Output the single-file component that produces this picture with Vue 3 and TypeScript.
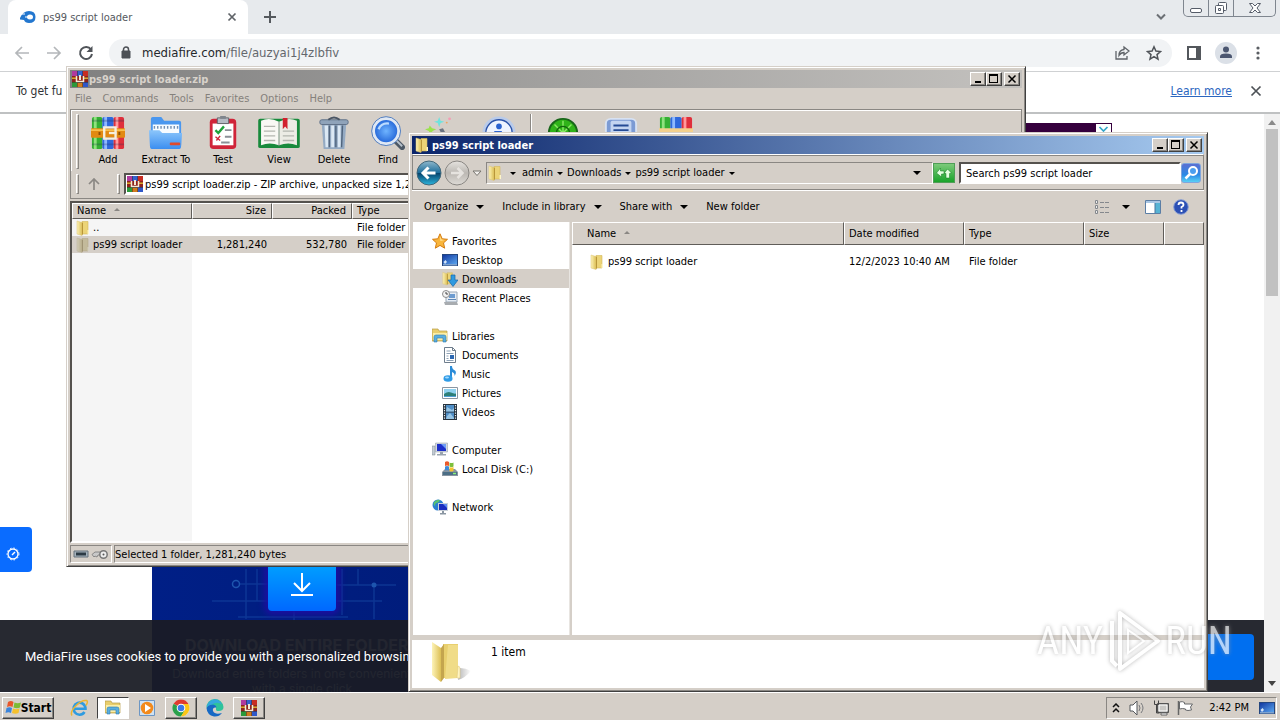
<script setup lang="ts">
import { ref } from 'vue'

interface ToolItem { label: string; icon: string; width: number }
interface TreeItem { label: string; icon: string; active?: boolean }
interface TreeGroup { label: string; icon: string; children: TreeItem[] }

const menus = ['File', 'Commands', 'Tools', 'Favorites', 'Options', 'Help']

const tools: ToolItem[] = [
  { label: 'Add', icon: 'i-books', width: 58 },
  { label: 'Extract To', icon: 'i-extract', width: 58 },
  { label: 'Test', icon: 'i-test', width: 56 },
  { label: 'View', icon: 'i-view', width: 56 },
  { label: 'Delete', icon: 'i-trash', width: 54 },
  { label: 'Find', icon: 'i-find', width: 54 },
  { label: '', icon: 'i-wizard', width: 54 },
  { label: '', icon: 'i-info', width: 60 },
]
const extraTools: ToolItem[] = [
  { label: '', icon: 'i-scan', width: 60 },
  { label: '', icon: 'i-comment', width: 56 },
  { label: '', icon: 'i-sfx', width: 54 },
]

const crumbs = ['admin', 'Downloads', 'ps99 script loader']
const commands = [
  { label: 'Organize', menu: true },
  { label: 'Include in library', menu: true },
  { label: 'Share with', menu: true },
  { label: 'New folder', menu: false },
]

const tree: TreeGroup[] = [
  {
    label: 'Favorites', icon: 'i-star', children: [
      { label: 'Desktop', icon: 'i-desktop' },
      { label: 'Downloads', icon: 'i-downloads', active: true },
      { label: 'Recent Places', icon: 'i-recent' },
    ],
  },
  {
    label: 'Libraries', icon: 'i-library', children: [
      { label: 'Documents', icon: 'i-doc' },
      { label: 'Music', icon: 'i-music' },
      { label: 'Pictures', icon: 'i-pic' },
      { label: 'Videos', icon: 'i-video' },
    ],
  },
  { label: 'Computer', icon: 'i-computer', children: [{ label: 'Local Disk (C:)', icon: 'i-disk' }] },
  { label: 'Network', icon: 'i-network', children: [] },
]

const tasks = [
  { label: 'Internet Explorer', icon: 'i-ie', state: '' },
  { label: 'Windows Explorer', icon: 'i-library', state: 'pressed' },
  { label: 'Media Player', icon: 'i-wmp', state: '' },
  { label: 'Chrome', icon: 'i-chrome', state: 'raised' },
  { label: 'Edge', icon: 'i-edge', state: '' },
  { label: 'WinRAR', icon: 'i-rar', state: 'raised' },
]

const archivePath = ref('ps99 script loader.zip - ZIP archive, unpacked size 1,281,240 bytes')
const query = ref('Search ps99 script loader')
</script>

<template>
  <div class="desktop">
    <svg class="defs" width="0" height="0" aria-hidden="true">
      <defs>
        <linearGradient id="g-folder" x1="0" x2="1"><stop offset="0" stop-color="#fdf3b8" /><stop offset="1" stop-color="#dcbf55" /></linearGradient>
        <linearGradient id="g-blue" x1="0" y1="0" x2="0" y2="1"><stop offset="0" stop-color="#8cc6fb" /><stop offset="1" stop-color="#3b8ef0" /></linearGradient>
        <linearGradient id="g-screen" x1="0" y1="0" x2="1" y2="1"><stop offset="0" stop-color="#1238a0" /><stop offset="1" stop-color="#5aa5ee" /></linearGradient>
        <linearGradient id="g-nav" x1="0" y1="0" x2="0" y2="1"><stop offset="0" stop-color="#8fb8cc" /><stop offset=".48" stop-color="#1f6f9c" /><stop offset=".52" stop-color="#07466f" /><stop offset="1" stop-color="#2cb5dd" /></linearGradient>
        <linearGradient id="g-off" x1="0" y1="0" x2="0" y2="1"><stop offset="0" stop-color="#e6e3df" /><stop offset=".5" stop-color="#bcb8b3" /><stop offset="1" stop-color="#dedbd6" /></linearGradient>
        <radialGradient id="g-lens"><stop offset="0" stop-color="#6fb4ff" /><stop offset="1" stop-color="#1f62d6" /></radialGradient>
        <linearGradient id="g-shade" x1="0" x2="1"><stop offset="0" stop-color="#888" /><stop offset="1" stop-color="#888" stop-opacity="0" /></linearGradient>
      </defs>
      <symbol id="i-folder" viewBox="0 0 16 16">
        <path d="M7 1.500h6v12.500H7z" fill="#ecd477" stroke="#d3b75a" stroke-width=".6" />
        <path d="M2 1l5 1.500v13L2 14z" fill="url(#g-folder)" stroke="#dcc574" stroke-width=".5" />
        <path d="M7 2.500l1 .5v11l-1 1.500z" fill="#b8963a" /><path d="M12.500 10h1.500v4h-1.500z" fill="#fff6c8" />
      </symbol>
      <symbol id="i-rar" viewBox="0 0 16 16">
        <path d="M0 0h16v16H0z" fill="#3a2418" /><path d="M0 0h5v5H0z" fill="#b03a9e" /><path d="M5.500 0h5v5h-5z" fill="#3561cf" /><path d="M11 0h5v5h-5z" fill="#c72c22" />
        <path d="M0 5h16v6H0z" fill="#8f241c" /><path d="M0 6.500h4v1.500H0zM12 6.500h4v1.500h-4z" fill="#d9a92c" /><path d="M4.500 5v5.500h7V5" fill="none" stroke="#f3ead6" stroke-width="1.500" /><path d="M7 4h2v5H7z" fill="#f3ead6" />
        <path d="M0 11.500h5V16H0z" fill="#2b9a3a" /><path d="M5.500 12h5v4h-5z" fill="#d07c1f" /><path d="M11 11.500h5V16h-5z" fill="#2f58c9" />
      </symbol>
      <symbol id="i-books" viewBox="0 0 36 36">
        <rect x="1" y="1" width="11" height="34" rx="2" fill="#35b034" /><rect x="3" y="1" width="3" height="34" fill="#8fe27e" />
        <rect x="12" y="1" width="12" height="34" rx="2" fill="#2f68dc" /><rect x="14" y="1" width="3" height="34" fill="#8fb9ff" />
        <rect x="24" y="1" width="11" height="34" rx="2" fill="#df2f3b" /><rect x="26" y="1" width="3" height="34" fill="#ff9a9d" />
        <path d="M1 4h34v2H1zM1 29h34v2H1z" fill="#1c2b52" opacity=".25" />
        <rect x="0" y="13" width="36" height="10" rx="1" fill="#e28a12" /><path d="M0 14h36v2H0z" fill="#f8c04d" />
        <path d="M14 12h12v12H14z" fill="none" stroke="#f5efdf" stroke-width="2.500" /><path d="M19 18h8" stroke="#f5efdf" stroke-width="2.500" /><path d="M30 17v3M9 17v3" stroke="#8d4f06" stroke-width="2" />
      </symbol>
      <symbol id="i-sfx" viewBox="0 0 36 36">
        <rect x="1" y="1" width="11" height="14" rx="2" fill="#35b034" /><rect x="3" y="1" width="3" height="14" fill="#8fe27e" />
        <rect x="12" y="1" width="12" height="14" rx="2" fill="#2f68dc" /><rect x="14" y="1" width="3" height="14" fill="#8fb9ff" />
        <rect x="24" y="1" width="11" height="14" rx="2" fill="#df2f3b" /><rect x="26" y="1" width="3" height="14" fill="#ff9a9d" />
        <path d="M0 13h36v22H0z" fill="#f3d08c" />
      </symbol>
      <symbol id="i-extract" viewBox="0 0 36 36">
        <path d="M2 3q0-2 2-2h9l3 4h16q2 0 2 2v24H2z" fill="#4a97ef" /><path d="M4 9h28v12H4z" fill="#f7fbff" />
        <path d="M5 12h26" stroke="#7390b4" stroke-width="3" stroke-dasharray="1.500 2" />
        <path d="M0 15h11l3 3h21l-1 14q0 3-3 3H4q-3 0-3-3z" fill="url(#g-blue)" /><rect x="22" y="28" width="11" height="3" rx="1" fill="#e14a2b" />
      </symbol>
      <symbol id="i-test" viewBox="0 0 36 36">
        <rect x="4" y="3" width="28" height="32" rx="4" fill="#d02439" /><path d="M7 8h22v23H7z" fill="#fff" /><path d="M12 2h12v6H12z" fill="#b6bcc4" stroke="#61656b" /><path d="M15 0h6v3h-6z" fill="#7f858c" />
        <path d="M10 15l3 3 6-7" fill="none" stroke="#21a23c" stroke-width="2.500" /><path d="M20 15h7M20 22h7M16 28h9" stroke="#8b9097" stroke-width="2" /><path d="M10 22l5 4M15 21l-4 5" stroke="#d02439" stroke-width="1.500" />
      </symbol>
      <symbol id="i-view" viewBox="0 0 44 36">
        <rect x="0" y="3" width="44" height="31" rx="2" fill="#188a3c" /><path d="M3 5q9-4 19 1v25q-10-4-19 0z" fill="#f8f8f4" /><path d="M41 5q-9-4-19 1v25q10-4 19 0z" fill="#ecece5" />
        <path d="M6 11h12M6 16h12M6 21h12M6 26h12M26 16h12M26 21h12M26 26h12" stroke="#b2b5ae" stroke-width="1.500" /><path d="M22 6v26" stroke="#6f8b77" /><path d="M26 2h5v12l-2.500-3-2.500 3z" fill="#d2202e" />
      </symbol>
      <symbol id="i-trash" viewBox="0 0 36 36">
        <path d="M5 8h26l-2 27H7z" fill="#94aac3" /><path d="M8 10l1 23h3V10zM15 10v23h3V10zM22 10v23h3V10z" fill="#dbe8f4" /><path d="M13 10v23M20 10v23M27 10l-1 23" stroke="#50647c" stroke-width="1.500" />
        <rect x="3" y="4" width="30" height="5" rx="2" fill="#8fa3ba" stroke="#5d6f86" /><path d="M12 4q6-5 12 0" fill="none" stroke="#4a5564" stroke-width="2" />
      </symbol>
      <symbol id="i-find" viewBox="0 0 36 36">
        <path d="M24 24l9 9" stroke="#4d5966" stroke-width="6" stroke-linecap="round" /><path d="M26 25l7 7" stroke="#b8c2cc" stroke-width="2" />
        <circle cx="16" cy="16" r="13.500" fill="url(#g-lens)" stroke="#dfe8f4" stroke-width="3.500" /><circle cx="16" cy="16" r="15.300" fill="none" stroke="#4b79bd" /><path d="M8 14q3-7 11-6" fill="none" stroke="#bcdcff" stroke-width="2.500" />
      </symbol>
      <symbol id="i-wizard" viewBox="0 0 36 36">
        <path d="M15 1l1.500 4 4 1-4 1.500L15 12l-1.500-4.500-4-1.500 4-1z" fill="#6fe3de" /><circle cx="26" cy="3" r="1.500" fill="#f59cb4" /><circle cx="23" cy="7" r="1" fill="#f3a45b" /><path d="M5 10l2.500 3L12 14l-4 2-2 4-2-4-4-2 4-1z" fill="#9be24d" /><path d="M15 14l4-1 12 22-4 2z" fill="#6b7380" />
      </symbol>
      <symbol id="i-info" viewBox="0 0 36 36">
        <circle cx="18" cy="18" r="16" fill="#eef4ff" stroke="#b9cbea" stroke-width="3" /><circle cx="18" cy="18" r="14" fill="none" stroke="#2a52a8" stroke-width="1.500" /><circle cx="18" cy="11" r="3" fill="#2b63cf" /><path d="M13 16h8v13h3v2H13v-2h3V18h-3z" fill="#2b63cf" />
      </symbol>
      <symbol id="i-scan" viewBox="0 0 36 36">
        <circle cx="18" cy="18" r="15" fill="#2fb319" stroke="#18661a" stroke-width="2" /><path d="M18 5v26M5 18h26M9 9l18 18M27 9L9 27" stroke="#8bea67" stroke-width="1.500" /><circle cx="18" cy="18" r="7" fill="none" stroke="#12660d" stroke-width="1.500" />
      </symbol>
      <symbol id="i-comment" viewBox="0 0 36 36">
        <rect x="2" y="3" width="32" height="26" rx="5" fill="#7c9bd4" stroke="#d8e2f2" stroke-width="2" /><rect x="7" y="5" width="22" height="22" rx="2" fill="#c3d4f0" /><path d="M10 10h16M10 15h16" stroke="#254a94" stroke-width="2" />
      </symbol>
      <symbol id="i-star" viewBox="0 0 16 16"><path d="M8 .8l2.200 5 5.300.5-4 3.600 1.200 5.300L8 12.400l-4.700 2.800 1.200-5.300-4-3.600 5.300-.5z" fill="#f9b63c" stroke="#d47c12" /><path d="M8 3l1.400 3.500 3 .5-4 1z" fill="#ffe39a" /></symbol>
      <symbol id="i-desktop" viewBox="0 0 16 16"><path d="M0 2h16v12H0z" fill="#24467f" /><path d="M1 3h14v9H1z" fill="url(#g-screen)" /><path d="M1 12h14v1.500H1z" fill="#7fa3cf" /><path d="M1.500 10l2-2 1.500 2-2 2z" fill="#d5e7f8" /></symbol>
      <symbol id="i-downloads" viewBox="0 0 16 16"><use href="#i-folder" x="-1" width="14" height="15" /><path d="M9 4h4v5h3l-5 6.500L6 9h3z" fill="#2f9ae0" stroke="#1766a8" stroke-width=".7" /></symbol>
      <symbol id="i-recent" viewBox="0 0 16 16"><path d="M4 2h11v10H4z" fill="#e6edf5" stroke="#9aa7b4" /><path d="M7 4h6v4H7z" fill="#6d9cd0" /><path d="M2 12h13l1 3H3z" fill="#a8acb0" /><path d="M6 9.500h8" stroke="#5f88b6" /><circle cx="4" cy="4" r="3.500" fill="#f3f3f3" stroke="#8c8c8c" /><path d="M4 2v2h2" fill="none" stroke="#444" /></symbol>
      <symbol id="i-library" viewBox="0 0 16 16"><path d="M0 1h6l1 2h8v10H0z" fill="#e9ce6c" stroke="#b89b45" stroke-width=".7" /><path d="M1 5h14v7H1z" fill="#fbeea8" /><path d="M2 14V9q0-2 2-2h8q2 0 2 2v5h-3v-4H5v4z" fill="#5aaede" stroke="#2b7bb0" stroke-width=".6" /></symbol>
      <symbol id="i-doc" viewBox="0 0 16 16"><path d="M2.500.5h8l3 3v12h-11z" fill="#fff" stroke="#6e7d8c" /><path d="M10.500.5v3h3" fill="none" stroke="#6e7d8c" /><path d="M4.500 4h4M4.500 6.500h7M4.500 9h2M4.500 11.500h2M4.500 13.500h7" stroke="#8ea2b6" /><path d="M8 8h4v4H8z" fill="#2c68b2" /></symbol>
      <symbol id="i-music" viewBox="0 0 16 16"><path d="M8 0h2q0 3 3 4.500Q15 6.500 12.500 10q.5-3-2.500-4v6.500H8z" fill="#2b8cd8" /><ellipse cx="6" cy="12.500" rx="4.500" ry="3.300" fill="#2f9be6" /><ellipse cx="5" cy="11.500" rx="2" ry="1" fill="#a5dbff" /></symbol>
      <symbol id="i-pic" viewBox="0 0 16 16"><path d="M.5 2.500h15v11H.5z" fill="#fff" stroke="#8a96a2" /><path d="M2 4h12v8H2z" fill="#8fd1ef" /><path d="M2 9q4-3 7-1.500t5 1V12H2z" fill="#2d7f78" /><path d="M2 11h12v1H2z" fill="#4f9fd6" /></symbol>
      <symbol id="i-video" viewBox="0 0 16 16"><path d="M1 0h14v16H1z" fill="#26323d" /><path d="M4 1h8v6.500H4zM4 8.500h8V15H4z" fill="#4f8ec6" /><path d="M5 3l5 3 2-2v3.500H4zM5 12l3-3 4 5v1H4z" fill="#96c4e4" /><path d="M2.500 1v15M13.500 1v15" stroke="#e8eef3" stroke-width="1.200" stroke-dasharray="1.200 1.300" /></symbol>
      <symbol id="i-computer" viewBox="0 0 16 16"><path d="M0 4h3v9H0z" fill="#c3cbd3" stroke="#7a858f" stroke-width=".5" /><path d="M3.500 1h12v9h-12z" fill="#d4d9df" stroke="#8b96a2" stroke-width=".5" /><path d="M5 2h9v7H5z" fill="#1c2fc9" /><path d="M9 2h5v5z" fill="#6f9df5" /><path d="M8 10h3v2h3v1.500H5V12h3z" fill="#9aa4af" /></symbol>
      <symbol id="i-disk" viewBox="0 0 16 16"><path d="M0 11l3-3h10l3 3v4H0z" fill="#8794a0" /><path d="M1 11h14v3H1z" fill="#4c6e86" /><path d="M11 12.500h3" stroke="#8cf07c" stroke-width="1.500" /><path d="M3 1q2-1.500 4 0v4q-2-1-4 0z" fill="#ea5a2a" /><path d="M7.500 1.500q2 1 4 0v4q-2 1-4 0z" fill="#7cbf3a" /><path d="M3 5.500q2-1 4 0v4q-2-1-4 0z" fill="#3d8ad8" /><path d="M7.500 6q2 1 4 0v4q-2 1-4 0z" fill="#f5c22e" /></symbol>
      <symbol id="i-network" viewBox="0 0 16 16"><circle cx="6" cy="6" r="5.500" fill="#2b7fd0" /><path d="M2 3q3-3 6-2-1 3-3 3t-2 3Q1 6 2 3z" fill="#57c172" /><path d="M6 4h10v8H6z" fill="#c8d0d8" /><path d="M7 5h8v6H7z" fill="#1a2dc0" /><path d="M11 5h4v4z" fill="#5e8af0" /><path d="M10 12h2v2h2v1.500H8V14h2z" fill="#8a96a2" /></symbol>
      <symbol id="i-ie" viewBox="0 0 20 20"><path d="M5.500 10.800h11a6 6 0 1 0-1 3.200" fill="none" stroke="#2e9be0" stroke-width="2.600" /><path d="M3 17.500C0 13 11 1.500 17.500 2.500c2 .8 0 4-.5 5" fill="none" stroke="#eab532" stroke-width="1.500" /></symbol>
      <symbol id="i-wmp" viewBox="0 0 20 20"><path d="M2.500 2.500h15v15h-15z" fill="#cfe2f3" stroke="#6c96c4" /><circle cx="10" cy="10" r="6.300" fill="#f28a1c" /><path d="M8 6l6 4-6 4z" fill="#fff" /></symbol>
      <symbol id="i-chrome" viewBox="0 0 20 20"><circle cx="10" cy="10" r="8.500" fill="#fff" /><path d="M10 10L2.600 5.700a8.500 8.500 0 0 1 14.800 0z" fill="#df3b2f" /><path d="M10 10L2.600 5.700A8.500 8.500 0 0 0 10 18.500l4-6z" fill="#2ba14b" /><path d="M10 6h7.500A8.500 8.500 0 0 1 10 18.500l4-7z" fill="#fbc617" /><circle cx="10" cy="10" r="4.300" fill="#fff" /><circle cx="10" cy="10" r="3.300" fill="#3a78e7" /></symbol>
      <symbol id="i-edge" viewBox="0 0 20 20"><path d="M1.500 10A8.500 8.500 0 0 1 18.500 9q0 4-5 4-3 0-2.500-2Q11.500 7 7 7q-4 0-5.500 3z" fill="#2fc39a" /><path d="M1.500 10Q3 6.500 7 6.500q4 0 4.500 3Q7 9 8 13q2 4 9 2-3 4-8 3.500-7-1.500-7.500-8.500z" fill="#1769c4" /><path d="M4 4q6-5 11-.5l2 3Q12 3 7 6.500 3 7 1.700 9 2 6 4 4z" fill="#35a7dd" /></symbol>
      <symbol id="i-flag" viewBox="0 0 16 16"><path d="M3 2q3-2 5.500 0L7.500 7Q5 5.500 2 7z" fill="#e8562a" /><path d="M9.500 2.500q3 1.500 6.500 0L15 7.500q-3 1.500-6.500 0z" fill="#7dbb35" /><path d="M1.500 8q3-1.500 5.500 0L6 13q-2.500-1.500-5.500 0z" fill="#3b85dc" /><path d="M8 8.500q3 1.500 6.500 0l-1 4.500q-3 1.500-6.500 0z" fill="#f5c02b" /></symbol>
    </svg>

    <section class="browser">
      <header class="tabstrip">
        <div class="tab">
          <svg width="16" height="14" viewBox="0 0 16 14"><path d="M0 8Q3 1 9 1q6.500 0 6.500 6T9 13Q5 13 4 10L0 9.500z" fill="#2377cf" /><ellipse cx="10" cy="7" rx="3" ry="2.500" fill="#fff" /><path d="M1 4h4M5 7h4" stroke="#fff" stroke-width="1" /></svg>
          <span>ps99 script loader</span>
          <button aria-label="Close tab"><svg width="10" height="10" viewBox="0 0 10 10"><path d="M1.500 1.500l7 7M8.500 1.500l-7 7" stroke="#5f6368" stroke-width="1.700" /></svg></button>
        </div>
        <button class="newtab" aria-label="New tab"><svg width="14" height="14" viewBox="0 0 14 14"><path d="M7 1v12M1 7h12" stroke="#55595e" stroke-width="2" /></svg></button>
        <button class="tabsearch" aria-label="Search tabs"><svg width="10" height="8" viewBox="0 0 10 8"><path d="M1 1.500l4 4 4-4" fill="none" stroke="#6c7075" stroke-width="2" /></svg></button>
        <div class="aero">
          <button aria-label="Minimize"><svg width="14" height="14" viewBox="0 0 14 14"><rect x="1.500" y="7.500" width="11" height="4" rx="1.500" fill="#fff" stroke="#555c68" /></svg></button>
          <button aria-label="Restore"><svg width="14" height="14" viewBox="0 0 14 14"><rect x="4.500" y="1.500" width="8" height="8" rx="1" fill="#fff" stroke="#555c68" /><rect x="1.500" y="4.500" width="8" height="8" rx="1" fill="#fff" stroke="#555c68" /><path d="M4.500 7.500h2v2h-2z" fill="#fff" stroke="#555c68" /></svg></button>
          <button aria-label="Close"><svg width="14" height="14" viewBox="0 0 14 14"><path d="M1.500 2.500h3L7 5l2.500-2.500h3L9 7l3.500 4.500h-3L7 9l-2.500 2.500h-3L5 7z" fill="#fff" stroke="#555c68" /></svg></button>
        </div>
      </header>
      <div class="navrow">
        <button aria-label="Back"><svg width="16" height="14" viewBox="0 0 16 14"><path d="M15 7H2M8 1L2 7l6 6" fill="none" stroke="#b4b7ba" stroke-width="1.700" /></svg></button>
        <button aria-label="Forward"><svg width="16" height="14" viewBox="0 0 16 14"><path d="M1 7h13M8 1l6 6-6 6" fill="none" stroke="#b4b7ba" stroke-width="1.700" /></svg></button>
        <button aria-label="Reload"><svg width="16" height="16" viewBox="0 0 16 16"><path d="M13 4.500A6 6 0 1 0 14 9" fill="none" stroke="#505459" stroke-width="2" /><path d="M14.500 1v6h-6z" fill="#505459" /></svg></button>
        <div class="omnibox">
          <svg width="10" height="14" viewBox="0 0 10 14"><path d="M1 5h8v7H1z" fill="#4d5156" stroke="#4d5156" stroke-linejoin="round" /><path d="M2.500 5V3.500a2.500 2.500 0 0 1 5 0V5" fill="none" stroke="#4d5156" stroke-width="1.500" /></svg>
          <span class="url">mediafire.com<i>/file/auzyai1j4zlbfiv</i></span>
          <button aria-label="Share"><svg width="16" height="16" viewBox="0 0 16 16"><path d="M2 6v8h11v-3" fill="none" stroke="#5f6368" stroke-width="1.300" /><path d="M10 2l5 4-5 4V7.500q-3 0-5 3 0-5.500 5-6z" fill="none" stroke="#5f6368" stroke-width="1.300" /></svg></button>
          <button aria-label="Bookmark"><svg width="16" height="16" viewBox="0 0 16 16"><path d="M8 1.800l1.900 4.300 4.600.4-3.500 3.100 1 4.600-4-2.500-4 2.500 1-4.600L1.500 6.500l4.600-.4z" fill="none" stroke="#505459" stroke-width="1.500" /></svg></button>
        </div>
        <button aria-label="Side panel"><svg width="14" height="14" viewBox="0 0 14 14"><path d="M1 1h12v12H1z" fill="none" stroke="#53575c" stroke-width="2" /><path d="M9 1h4v12H9z" fill="#53575c" /></svg></button>
        <button aria-label="Profile"><svg width="22" height="22" viewBox="0 0 22 22"><circle cx="11" cy="11" r="11" fill="#dbe0e7" /><circle cx="11" cy="7.500" r="3" fill="#4b5670" /><path d="M5 16v-1.500q0-3 6-3t6 3V16z" fill="#4b5670" /></svg></button>
        <button aria-label="Menu"><svg width="16" height="16" viewBox="0 0 16 16" fill="#5a5e63"><circle cx="8" cy="3" r="1.600" /><circle cx="8" cy="8" r="1.600" /><circle cx="8" cy="13" r="1.600" /></svg></button>
      </div>
      <div class="infobar">
        <span>To get fu</span>
        <a href="#">Learn more</a>
        <button aria-label="Dismiss"><svg width="12" height="12" viewBox="0 0 12 12"><path d="M1.500 1.500l9 9M10.500 1.500l-9 9" stroke="#4d5156" stroke-width="1.700" /></svg></button>
      </div>
      <main class="page">
        <div class="content">
          <div class="ad"><svg width="15" height="14" viewBox="0 0 15 14"><path d="M0 0h15v14H0z" fill="#fff" /><path d="M3.500 3l4 4 4-4" fill="none" stroke="#35a6c8" stroke-width="1.700" /></svg></div>
          <div class="promo">
            <div class="feature">
              <svg class="circuit" width="256" height="80" viewBox="0 0 256 80"><path d="M88 15h28M60 32h56M86 48h110M94 0v50M105 0v32M190 0v46M206 0v16M222 16v34M184 16h60M180 32h50M142 42v12" fill="none" stroke="#1d55ae" stroke-width="1.500" opacity=".45" /><circle cx="84" cy="15" r="3.500" fill="none" stroke="#1d55ae" stroke-width="1.500" /><circle cx="222" cy="16" r="2.500" fill="#1d55ae" /></svg>
              <div class="tile"><svg width="24" height="26" viewBox="0 0 24 26"><path d="M12 2v17M4 12l8 8 8-8M1 24h22" fill="none" stroke="#fff" stroke-width="2" /></svg></div>
              <strong>DOWNLOAD ENTIRE FOLDERS</strong>
              <p>Download entire folders in one convenient file with a single click</p>
            </div>
          </div>
        </div>
        <div class="scroll"><i class="up" /><i class="thumb" /><i class="down" /></div>
        <button class="side" aria-label="Settings"><svg width="14" height="14" viewBox="0 0 14 14"><circle cx="7" cy="7" r="5" fill="none" stroke="#fff" stroke-width="1.300" /><circle cx="7" cy="7" r="6" fill="none" stroke="#fff" stroke-dasharray="1.500 2" /><path d="M6 8l3-3" stroke="#fff" stroke-width="1.500" /></svg></button>
        <div class="cookie">
          <span>MediaFire uses cookies to provide you with a personalized browsing</span>
          <button aria-label="Accept cookies" />
        </div>
      </main>
    </section>

    <section class="window archive">
      <header class="title idle">
        <svg width="18" height="16"><use href="#i-rar" /></svg><span>ps99 script loader.zip</span>
        <div class="ctl">
          <button aria-label="Minimize"><svg width="12" height="10" viewBox="0 0 12 10"><path d="M3 7h6v2H3z" /></svg></button>
          <button aria-label="Maximize"><svg width="12" height="10" viewBox="0 0 12 10"><path d="M1 0h9v9H1zM2 2v6h7V2z" fill-rule="evenodd" /></svg></button>
          <button aria-label="Close"><svg width="12" height="10" viewBox="0 0 12 10"><path d="M2.500 1.500l7 7M9.500 1.500l-7 7" stroke="#000" stroke-width="1.500" /></svg></button>
        </div>
      </header>
      <nav class="menu"><button v-for="m in menus" :key="m">{{ m }}</button></nav>
      <div class="band">
        <i class="grip" />
        <button v-for="t in tools" :key="t.icon" :style="{ width: t.width + 'px' }"><svg :width="t.icon === 'i-view' ? 42 : 34" height="34"><use :href="'#' + t.icon" /></svg>{{ t.label }}</button>
        <i class="sep" />
        <button v-for="t in extraTools" :key="t.icon" :style="{ width: t.width + 'px' }"><svg width="34" height="34"><use :href="'#' + t.icon" /></svg>{{ t.label }}</button>
      </div>
      <div class="path">
        <i class="grip" />
        <button aria-label="Up"><svg width="12" height="12" viewBox="0 0 12 12"><path d="M6 12V2M1 6l5-5 5 5" fill="none" stroke="#8b8884" stroke-width="1.700" /></svg></button>
        <i class="grip" />
        <div class="pathbox"><svg width="16" height="16"><use href="#i-rar" /></svg><input v-model="archivePath" aria-label="Archive path" /></div>
      </div>
      <div class="files">
        <table>
          <colgroup><col class="c-name" /><col class="c-num" /><col class="c-num" /><col /></colgroup>
          <thead><tr><th>Name <i class="asc" /></th><th class="num">Size</th><th class="num">Packed</th><th>Type</th></tr></thead>
          <tbody>
            <tr><td><div><svg width="16" height="16"><use href="#i-folder" /></svg>..</div></td><td /><td /><td>File folder</td></tr>
            <tr class="sel"><td><div><svg width="16" height="16"><use href="#i-folder" /></svg>ps99 script loader</div></td><td class="num">1,281,240</td><td class="num">532,780</td><td>File folder</td></tr>
          </tbody>
        </table>
      </div>
      <footer class="status">
        <span class="cell"><svg width="36" height="12" viewBox="0 0 36 12"><path d="M1 3h14v6H1z" fill="#a4b1bb" stroke="#66727c" /><path d="M3 4.500h10v3H3z" fill="#2c3a44" /><path d="M19 6.500l3-2.500h6v3h-3l-1 2-2-1-1 1z" fill="#c9c9c9" stroke="#777" stroke-width=".8" /><circle cx="30.500" cy="6.500" r="3.700" fill="#eee" stroke="#777" stroke-width="1.500" /><circle cx="30.500" cy="6.500" r="1" fill="#555" /></svg></span>
        <span class="cell grow">Selected 1 folder, 1,281,240 bytes</span>
      </footer>
    </section>

    <section class="window explorer">
      <header class="title">
        <svg width="16" height="16"><use href="#i-folder" /></svg><span>ps99 script loader</span>
        <div class="ctl">
          <button aria-label="Minimize"><svg width="12" height="10" viewBox="0 0 12 10"><path d="M3 7h6v2H3z" /></svg></button>
          <button aria-label="Maximize"><svg width="12" height="10" viewBox="0 0 12 10"><path d="M1 0h9v9H1zM2 2v6h7V2z" fill-rule="evenodd" /></svg></button>
          <button aria-label="Close"><svg width="12" height="10" viewBox="0 0 12 10"><path d="M2.500 1.500l7 7M9.500 1.500l-7 7" stroke="#000" stroke-width="1.500" /></svg></button>
        </div>
      </header>
      <div class="nav">
        <button aria-label="Back"><svg width="26" height="26" viewBox="0 0 26 26"><circle cx="13" cy="13" r="12" fill="url(#g-nav)" stroke="#426779" /><path d="M19.500 13H8M12.500 7.500L7 13l5.500 5.500" fill="none" stroke="#fff" stroke-width="3" /></svg></button>
        <button aria-label="Forward"><svg width="26" height="26" viewBox="0 0 26 26"><circle cx="13" cy="13" r="12" fill="url(#g-off)" stroke="#8a8783" /><path d="M7 13h11M13.500 8l5 5-5 5" fill="none" stroke="#e6e3df" stroke-width="2.500" /></svg></button>
        <button class="recent" aria-label="Recent pages"><svg width="10" height="7" viewBox="0 0 10 7"><path d="M1 1h8L5 5.500z" fill="#f3f1ee" stroke="#77746f" /></svg></button>
        <div class="crumbs">
          <svg width="16" height="16"><use href="#i-folder" /></svg>
          <i class="tri lead" />
          <button v-for="c in crumbs" :key="c">{{ c }}<i class="tri" /></button>
          <i class="tri last" />
        </div>
        <button class="refresh" aria-label="Refresh"><svg width="20" height="18" viewBox="0 0 20 18"><path d="M2.500 9l4-5v3H10v3H7.500v3zM17.500 9l-4 -4-3.500 4.500h2V14h3.500V9.500z" fill="#e4ffe0" stroke="#0f7b1d" stroke-width=".5" /></svg></button>
        <input v-model="query" class="search" aria-label="Search" />
        <button class="go" aria-label="Search"><svg width="18" height="18" viewBox="0 0 18 18"><circle cx="11" cy="7" r="4" fill="#4b9eee" stroke="#fff" stroke-width="2" /><path d="M8 10l-4.500 4.500" stroke="#fff" stroke-width="2.500" /></svg></button>
      </div>
      <div class="commands">
        <button v-for="c in commands" :key="c.label">{{ c.label }}<i v-if="c.menu" class="tri big" /></button>
        <span class="fill" />
        <button aria-label="View"><svg width="16" height="14" viewBox="0 0 16 14"><path d="M1.500.500h2v3h-2zM1.500 5.500h2v3h-2zM1.500 10.500h2v3h-2z" fill="#eee" stroke="#84888d" /><path d="M6 2.500h4M11 2.500h4M6 7.500h4M11 7.500h4M6 12.500h4M11 12.500h4" stroke="#84888d" /></svg></button>
        <button class="drop" aria-label="View options"><i class="tri big" /></button>
        <button aria-label="Preview pane"><svg width="16" height="14" viewBox="0 0 16 14"><path d="M.5.500h15v13H.5z" fill="#fff" stroke="#5b7ea5" /><path d="M1 1h14v2H1z" fill="#a9c6e4" /><path d="M10 3h5v10h-5z" fill="#56b3d4" /><path d="M10 3v10" stroke="#48759d" /></svg></button>
        <button class="help" aria-label="Help"><svg width="16" height="16" viewBox="0 0 16 16"><circle cx="8" cy="8" r="7.300" fill="#2c50b5" stroke="#8ba0d4" /><path d="M5.500 6q0-2.500 2.500-2.500T10.500 6Q10.500 7 8.500 8v1.500M8.500 11v2" fill="none" stroke="#fff" stroke-width="1.800" /></svg></button>
      </div>
      <div class="panes">
        <nav class="tree">
          <div v-for="g in tree" :key="g.label" class="group">
            <a href="#" class="root"><svg width="16" height="16"><use :href="'#' + g.icon" /></svg><span>{{ g.label }}</span></a>
            <a v-for="c in g.children" :key="c.label" href="#" :class="{ active: c.active }"><svg width="16" height="16"><use :href="'#' + c.icon" /></svg><span>{{ c.label }}</span></a>
          </div>
        </nav>
        <div class="list">
          <table>
            <colgroup><col /><col class="c-a" /><col class="c-a" /><col class="c-b" /><col class="c-c" /></colgroup>
            <thead><tr><th>Name <i class="asc" /></th><th>Date modified</th><th>Type</th><th>Size</th><th /></tr></thead>
            <tbody><tr><td><div><svg width="16" height="16"><use href="#i-folder" /></svg>ps99 script loader</div></td><td>12/2/2023 10:40 AM</td><td>File folder</td><td /><td /></tr></tbody>
          </table>
        </div>
      </div>
      <footer class="details">
        <svg width="48" height="48" viewBox="0 0 48 48"><path d="M27 40l2-12q6 0 11 3-6 7-13 9z" fill="url(#g-shade)" opacity=".6" /><path d="M12 4h15v34H12z" fill="#e8cf6e" /><path d="M17 5h10v33l-13 1z" fill="#f0dc88" /><path d="M1 2l9 6v34L1 35z" fill="url(#g-folder)" /><path d="M10 8l3-4v34l-3 4z" fill="#c4a54e" /><path d="M27 26q2 0 2 3v9h-3z" fill="#fff5c4" stroke="#dcc574" stroke-width=".5" /></svg>
        <span>1 item</span>
      </footer>
    </section>

    <div class="brand">
      <span>ANY</span>
      <svg width="54" height="62" viewBox="0 0 54 62"><path d="M13 3v56l38-28z" fill="none" stroke="#fff" stroke-width="4" stroke-linejoin="round" /><path d="M21 20v23l16-12z" fill="none" stroke="#fff" stroke-width="2" /><path d="M5 11v40l5 5" fill="none" stroke="#fff" stroke-width="4" /></svg>
      <span>RUN</span>
    </div>

    <footer class="taskbar">
      <button class="start"><svg width="16" height="16"><use href="#i-flag" /></svg>Start</button>
      <button v-for="t in tasks" :key="t.label" class="task" :class="t.state" :aria-label="t.label"><svg :width="t.icon === 'i-library' || t.icon === 'i-rar' ? 16 : 20" :height="t.icon === 'i-library' || t.icon === 'i-rar' ? 16 : 20"><use :href="'#' + t.icon" /></svg></button>
      <div class="tray">
        <svg width="8" height="10" viewBox="0 0 8 10"><path d="M1 4l3-3 3 3M1 9l3-3 3 3" fill="none" stroke="#111" stroke-width="1.500" /></svg>
        <svg class="spk" width="16" height="16" viewBox="0 0 16 16"><path d="M1 5h3l4-4v14l-4-4H1z" fill="#fff" stroke="#55585c" /><path d="M10 5q2 3 0 6M12 3q4 5 0 10" fill="none" stroke="#77797c" /></svg>
        <svg class="net" width="16" height="16" viewBox="0 0 16 16"><path d="M4.500 3.500h11v9h-11z" fill="#9a9a98" stroke="#555" /><path d="M6 5h8v6H6z" fill="#c9c8c5" stroke="#fff" /><path d="M8 13h6v2H8z" fill="#fff" stroke="#666" /><path d="M1.500.500v4h4v-4M3.500 5v8h3" fill="none" stroke="#444" /></svg>
        <svg class="net" width="16" height="16" viewBox="0 0 16 16"><path d="M1.500 1v14" stroke="#666" stroke-width="1.500" /><path d="M2.500 2q3-1 5 .5v1.500h8l-2 3 1 3q-4 1-6 0V9q-3-1-6 0z" fill="#fff" stroke="#66686b" /></svg>
        <time>2:42 PM</time>
        <svg width="16" height="16"><use href="#i-desktop" /></svg>
      </div>
    </footer>
  </div>
</template>

<style>
html, body { margin: 0; overflow: hidden; }
</style>

<style scoped>
.desktop {
  --face: #d5cfc8;
  position: relative; display: flex; flex-direction: column; height: 100vh; min-height: 600px; overflow: hidden;
  font: 11px/16px "DejaVu Sans Condensed", "Liberation Sans", sans-serif; color: #000; background: #fff;
}
.desktop *, .desktop *::before { box-sizing: border-box; }
.defs { position: absolute; }
svg { display: block; flex: none; }
button { display: flex; align-items: center; justify-content: center; flex: none; margin: 0; padding: 0; border: 0; background: none; font: inherit; color: inherit; white-space: nowrap; }
input { min-width: 0; font: inherit; color: inherit; border: 0; padding: 0; background: none; outline: 0; }
table { width: 100%; table-layout: fixed; border-collapse: separate; border-spacing: 0; }
th, td { padding: 0; font-weight: 400; text-align: left; white-space: nowrap; overflow: hidden; }

/* browser */
.browser { flex: 1; display: flex; flex-direction: column; min-height: 0; }
.tabstrip { display: flex; height: 34px; flex: none; padding-left: 8px; background: #e7eaed; }
.tab { display: flex; align-items: center; gap: 7px; width: 240px; padding: 0 10px 0 12px; background: #fff; border-radius: 8px 8px 0 0; color: #55595e; }
.tab span { flex: 1; padding-top: 1px; }
.tab button { width: 12px; }
.newtab { width: 28px; margin-left: 8px; }
.tabsearch { width: 28px; margin: 0 8px 0 auto; }
.aero { display: flex; height: 17px; margin-right: 4px; border: 1px solid #7f868f; border-top: 0; border-radius: 0 0 5px 5px; }
.aero button { width: 25px; border-right: 1px solid #7f868f; }
.aero button:last-child { width: 41px; border: 0; }
.navrow { display: flex; align-items: center; height: 37px; flex: none; padding: 0 6px; background: #fff; }
.navrow > button { width: 32px; }
.omnibox { flex: 1; display: flex; align-items: center; height: 28px; margin: 0 6px 0 7px; padding: 0 2px 0 12px; border-radius: 14px; background: #f1f3f5; }
.omnibox button { width: 32px; }
.url { flex: 1; margin-left: 11px; font-size: 13px; color: #25282c; }
.url i { font-style: normal; color: #64686d; }
.infobar { display: flex; align-items: center; height: 43px; flex: none; padding: 0 18px 2px 16px; border-top: 1px solid #cfd1d3; border-bottom: 2px solid #bfc1c2; font-size: 12px; color: #303336; }
.infobar a { margin-left: auto; color: #2b66bf; }
.infobar button { margin-left: 18px; }
.page { position: relative; flex: 1; display: flex; min-height: 0; }
.content { flex: 1; display: flex; flex-direction: column; min-width: 0; padding: 9px 152px 0; }
.ad { display: flex; justify-content: flex-end; height: 90px; flex: none; background: #35003d; padding: 1px; }
.promo { flex: 1; margin-top: 250px; background: linear-gradient(90deg, #001f86, #001560); }
.feature { position: relative; display: flex; flex-direction: column; align-items: center; width: 300px; padding-top: 74px; text-align: center; color: #b4bce0; font-family: Inter, sans-serif; }
.circuit { position: absolute; left: 0; top: 106px; }
.tile { position: relative; display: flex; align-items: flex-end; justify-content: center; width: 68px; height: 74px; padding-bottom: 14px; border-radius: 4px; background: linear-gradient(#009dff 40%, #0068ff); box-shadow: 0 0 6px 4px #1c0fa0; }
.feature strong { margin-top: 25px; font-size: 16px; line-height: 18px; white-space: nowrap; }
.feature p { width: 280px; margin: 12px 0 0; font-size: 12px; line-height: 15px; padding: 0 10px; }
.scroll { display: flex; flex-direction: column; align-items: center; width: 16px; padding: 6px 0; background: #f1f1f1; }
.scroll .up, .scroll .down { border: 4px solid transparent; border-top: 0; border-bottom: 5px solid #8a8a8a; }
.scroll .thumb { width: 12px; height: 167px; margin-top: 4px; background: #c1c1c1; }
.scroll .down { margin-top: auto; border-bottom: 0; border-top: 5px solid #444; }
.side { position: absolute; left: 0; bottom: 120px; width: 32px; height: 45px; padding: 8px 6px 0 0; border-radius: 0 4px 4px 0; background: #0a6cff; }
.cookie { position: absolute; left: 0; right: 16px; bottom: 0; display: flex; align-items: center; height: 72px; padding: 2px 10px 0 25px; background: rgba(25, 28, 36, .94); color: #fff; font: 13px/18px Roboto, sans-serif; }
.cookie button { width: 110px; height: 46px; margin-left: auto; border-radius: 4px; background: #006ff0; }

/* classic windows */
.window { position: absolute; display: flex; flex-direction: column; padding: 3px; background: var(--face); border: 1px solid; border-color: var(--face) #404040 #404040 var(--face); box-shadow: inset 1px 1px #fff, inset -1px -1px #8a8783; }
.archive { left: 66px; right: 254px; top: 66px; bottom: 153px; }
.explorer { left: 408px; right: 72px; top: 132px; bottom: 28px; }
.title { display: flex; align-items: center; height: 18px; flex: none; padding: 0 2px; background: linear-gradient(90deg, #0a246a, #a6caf0); color: #fff; font-weight: 700; }
.title span { margin-left: 2px; padding-top: 1px; }
.title.idle { padding-left: 1px; background: linear-gradient(90deg, #808080, #c3c1be); color: #d8d2cb; }
.title.idle span { margin-left: 0; }
.ctl { display: flex; margin-left: auto; }
.ctl button { width: 16px; height: 14px; background: var(--face); border: 1px solid; border-color: #fff #404040 #404040 #fff; box-shadow: inset -1px -1px #8a8783; }
.ctl button:last-child { margin-left: 2px; }
.menu { display: flex; gap: 11px; height: 21px; flex: none; padding: 0 5px; color: #85817c; }
.band { display: flex; height: 62px; flex: none; padding: 4px 0 2px 5px; border: 1px solid #8a8783; border-bottom: 0; box-shadow: inset 1px 1px #fff; overflow: hidden; }
.band button { flex-direction: column; justify-content: flex-start; padding-top: 2px; gap: 1px; line-height: 17px; }
.grip { width: 3px; flex: none; border: 1px solid; border-color: #fff #8a8783 #8a8783 #fff; }
.sep { width: 2px; margin: 0 1px; border-left: 1px solid #8a8783; border-right: 1px solid #fff; }
.path { display: flex; align-items: center; height: 28px; flex: none; padding: 0 2px 2px 5px; border: 1px solid #8a8783; border-top: 0; }
.path .grip { height: 20px; }
.path button { width: 29px; margin-right: 9px; }
.pathbox { flex: 1; display: flex; align-items: center; gap: 2px; height: 22px; margin-left: 4px; padding-left: 1px; background: #fff; border: 2px solid; border-color: #55524e #fff #fff #55524e; }
.pathbox input { flex: 1; padding-top: 2px; }
.files { flex: 1; min-height: 0; margin-top: 2px; border: 2px solid; border-color: #55524e #fff #fff #55524e; background: linear-gradient(90deg, #f5f5f5 120px, #fff 120px); }
.files .c-name { width: 120px; }
.files .c-num { width: 80px; }
th { background: var(--face); border: 1px solid; border-color: #fff #605d59 #605d59 #fff; }
.files th { height: 16px; padding: 0 5px 0 4px; line-height: 14px; }
.files td { height: 17px; padding: 0 5px; line-height: 17px; }
.files td:first-child { padding-left: 3px; }
.files .num { text-align: right; }
td div { display: flex; align-items: center; }
.files td div { gap: 2px; height: 17px; }
.files .sel { background: var(--face); }
.files .sel svg { opacity: .75; filter: saturate(.5) brightness(.85); }
.asc { display: inline-block; margin: 0 0 3px 5px; border: 3px solid transparent; border-top: 0; border-bottom: 3px solid #8a8783; }
.status { display: flex; gap: 2px; height: 20px; flex: none; padding-top: 2px; }
.cell { display: flex; align-items: center; padding: 0 2px; border: 1px solid; border-color: #8a8783 #fff #fff #8a8783; }
.grow { flex: 1; padding: 1px 0 0; }

.nav { display: flex; align-items: center; height: 36px; flex: none; padding: 2px 2px 0 3px; border: 1px solid; border-color: #fff #8a8783 #8a8783 #8a8783; box-shadow: 0 1px #fff, inset 0 1px #8a8783; }
.nav > button { margin-right: 2px; }
.nav .recent { width: 10px; margin-right: 4px; }
.crumbs { flex: 1; display: flex; align-items: center; height: 22px; border: 1px solid; border-color: #8a8783 #fff #fff #8a8783; }
.crumbs button { gap: 4px; margin-right: 4px; }
.tri { display: block; border: 3px solid transparent; border-top: 3px solid #000; border-bottom: 0; }
.tri.big { border-width: 4px 4px 0; }
.crumbs .lead { margin: 0 6px 0 7px; }
.crumbs .last { margin: 0 11px 0 auto; border-width: 4px 4px 0; }
.nav .refresh { width: 22px; height: 20px; margin-right: 4px; border: 1px solid #4f9e56; background: linear-gradient(#7cca7a, #19a32a); }
.search { width: 222px; height: 22px; padding-left: 5px; background: #fff; border: 2px solid; border-color: #55524e #fff #fff #55524e; }
.nav .go { width: 20px; height: 20px; margin: 0; border-radius: 3px; border: 1px solid #7fa5dd; background: linear-gradient(#5b6fd2, #2a8ae6 60%, #59d0f5); }
.commands { display: flex; align-items: center; height: 32px; flex: none; padding: 1px 15px 0 12px; }
.commands button { gap: 8px; margin-right: 18px; }
.fill { flex: 1; }
.commands .fill ~ button { margin-right: 12px; }
.commands .drop ~ button { margin-left: 3px; }
.commands .fill ~ .help { margin: 0; }
.panes { flex: 1; display: flex; min-height: 0; }
.tree { width: 158px; flex: none; padding-top: 9px; background: #fff; border-left: 1px solid var(--face); border-right: 1px solid #e8e5e1; }
.group { margin-bottom: 19px; }
.tree a { display: flex; align-items: center; gap: 4px; height: 19px; padding-left: 29px; color: #000; text-decoration: none; }
.tree span { padding-top: 2px; }
.tree .root { padding-left: 19px; }
.tree .active { background: var(--face); }
.list { flex: 1; margin-left: 2px; background: #fff; }
.list th { height: 23px; padding: 1px 4px 0; }
.list th:first-child { padding-left: 14px; }
.list td { height: 34px; padding: 0 5px; }
.list td:first-child { padding-left: 17px; }
.list td div { gap: 3px; }
.list .c-a { width: 120px; }
.list .c-b { width: 80px; }
.list .c-c { width: 40px; }
.details { display: flex; height: 53px; flex: none; border-top: 5px solid var(--face); background: #fff; padding-left: 19px; font-size: 12px; line-height: 24px; }
.details span { margin-left: 12px; }

.brand { position: absolute; right: 48px; bottom: 47px; display: flex; align-items: center; gap: 4px; color: #fff; font: 39px/64px "Liberation Sans Narrow", "Roboto Condensed", Roboto, sans-serif; opacity: .7; filter: drop-shadow(0 0 2px #999); pointer-events: none; }

.taskbar { position: relative; display: flex; align-items: center; height: 28px; flex: none; padding: 3px 3px 1px 2px; border-top: 1px solid #fff; background: var(--face); }
.start { width: 52px; height: 22px; margin-right: 9px; font-size: 12px; font-weight: 700; }
.start, .raised { border: 1px solid; border-color: #fff #404040 #404040 #fff; box-shadow: inset -1px -1px #8a8783; }
.task { width: 32px; height: 22px; margin-right: 2px; }
.pressed { border: 1px solid; border-color: #404040 #fff #fff #404040; background: #fff; }
.tray { display: flex; align-items: center; height: 22px; margin-left: auto; padding: 0 1px 0 5px; border: 1px solid; border-color: #8a8783 #fff #fff #8a8783; }
.spk { margin-left: 9px; }
.net { margin-left: 8px; }
.tray time { margin: 0 10px 0 16px; }
</style>
